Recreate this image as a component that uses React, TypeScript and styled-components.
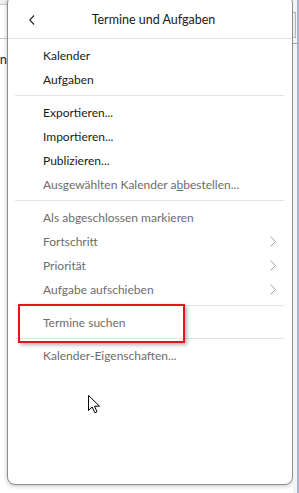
import React, { FC } from 'react';
import styled, { createGlobalStyle } from 'styled-components';

const GlobalStyle = createGlobalStyle`
    body {
        margin: 0;
        background: #ffffff;
        font-family: Lato, "Noto Sans", sans-serif;
    }
`;

const Stage = styled.div`
    position: relative;
    display: flex;
    width: 299px;
    height: 493px;
    overflow: hidden;
    background: #ffffff;
`;

const LeftEdge = styled.div`
    flex: none;
    width: 7px;
    display: flex;
    flex-direction: column;
    background: #ffffff;
    overflow: hidden;
`;

const EdgeBar = styled.div<{ $h: number; $bg: string }>`
    flex: none;
    height: ${p => p.$h}px;
    background: ${p => p.$bg};
    border-bottom: 1px solid #c8c8c8;
`;

const EdgeText = styled.div`
    flex: none;
    margin-top: 12px;
    display: flex;
    justify-content: flex-end;
    font-size: 13px;
    line-height: 16px;
    color: #2b1b4f;
    white-space: nowrap;
`;

const RightEdge = styled.div`
    flex: none;
    width: 6px;
    display: flex;
    background: #f3f3f3;
`;

const Track = styled.div`
    flex: 1;
    display: flex;
    flex-direction: column;
    padding-top: 12px;
`;

const Thumb = styled.div`
    height: 24px;
    margin-right: 1px;
    border: 1px solid #b4b4b4;
    border-left: none;
    background: #ececec;
`;

const TrackLine = styled.div`
    height: 1px;
    margin-top: 5px;
    background: #9a9a9a;
`;

const ScrollLine = styled.div`
    flex: none;
    width: 2px;
    background: #aab4cc;
`;

const Panel = styled.div`
    flex: none;
    width: 286px;
    height: 490px;
    margin-top: -5px;
    box-sizing: border-box;
    border: 1px solid #8e8e8e;
    border-radius: 8px;
    background: #ffffff;
    box-shadow: 0 1px 4px rgba(0, 0, 0, 0.25);
    display: flex;
    flex-direction: column;
`;

const Header = styled.div`
    flex: none;
    height: 43px;
    box-sizing: border-box;
    padding: 5px 26px 0 21px;
    display: flex;
    align-items: center;
    border-bottom: 1px solid #e3e3e3;
`;

const BackButton = styled.div`
    flex: none;
    width: 12px;
    display: flex;
    align-items: center;
`;

const Title = styled.div`
    flex: 1;
    text-align: center;
    font-size: 12.5px;
    color: #1a1a1a;
`;

const Menu = styled.div`
    padding-top: 4px;
    display: flex;
    flex-direction: column;
`;

const Item = styled.div<{ $disabled?: boolean }>`
    height: 24px;
    padding: 1px 16px 0 35px;
    box-sizing: border-box;
    display: flex;
    align-items: center;
    justify-content: space-between;
    font-size: 12px;
    color: ${p => (p.$disabled ? '#6d6d6d' : '#1a1a1a')};
    white-space: nowrap;
`;

const Separator = styled.div`
    height: 1px;
    margin: 4px 8px 4px 7px;
    background: #e3e3e3;
`;

const Highlight = styled.div`
    position: absolute;
    left: 18px;
    top: 304px;
    width: 167px;
    height: 39px;
    box-sizing: border-box;
    border: 2px solid #e8131b;
    box-shadow: 2px 2px 4px rgba(0, 0, 0, 0.3);
`;

const Cursor = styled.svg`
    position: absolute;
    left: 88px;
    top: 395px;
`;

const Chevron: FC = () => (
    <svg width="6" height="11" viewBox="0 0 6 11">
        <polyline points="0.5,0.5 5.5,5.5 0.5,10.5" fill="none" stroke="#a3a3a3" strokeWidth="1" />
    </svg>
);

type Entry = { label: React.ReactNode; disabled?: boolean; submenu?: boolean } | 'sep';

const entries: Entry[] = [
    { label: 'Kalender' },
    { label: 'Aufgaben' },
    'sep',
    { label: 'Exportieren...' },
    { label: 'Importieren...' },
    { label: 'Publizieren...' },
    { label: <>Ausgewählten Kalender a<u>b</u>bestellen...</>, disabled: true },
    'sep',
    { label: 'Als abgeschlossen markieren', disabled: true },
    { label: 'Fortschritt', disabled: true, submenu: true },
    { label: 'Priorität', disabled: true, submenu: true },
    { label: 'Aufgabe aufschieben', disabled: true, submenu: true },
    'sep',
    { label: 'Termine suchen', disabled: true },
    'sep',
    { label: 'Kalender-Eigenschaften...', disabled: true },
];

const App: FC = () => {
    return (
        <>
            <GlobalStyle />
            <Stage>
                <LeftEdge>
                    <EdgeBar $h={4} $bg="#f0f0f0" />
                    <EdgeBar $h={33} $bg="#ffffff" />
                    <EdgeText>n</EdgeText>
                </LeftEdge>

                <Panel>
                    <Header>
                        <BackButton>
                            <svg width="6" height="10" viewBox="0 0 6 10">
                                <polyline points="5,0.5 0.8,5 5,9.5" fill="none" stroke="#222" strokeWidth="1.1" />
                            </svg>
                        </BackButton>
                        <Title>Termine und Aufgaben</Title>
                    </Header>

                    <Menu>
                        {entries.map((entry, i) =>
                            entry === 'sep' ? (
                                <Separator key={i} />
                            ) : (
                                <Item key={i} $disabled={entry.disabled}>
                                    <span>{entry.label}</span>
                                    {entry.submenu && <Chevron />}
                                </Item>
                            )
                        )}
                    </Menu>
                </Panel>

                <RightEdge>
                    <Track>
                        <Thumb />
                        <TrackLine />
                    </Track>
                    <ScrollLine />
                </RightEdge>

                <Highlight />

                <Cursor width="13" height="20" viewBox="0 0 13 20">
                    <path
                        d="M0.5 0.5 L0.5 15.5 L4.2 12 L6.8 17.8 L9 16.8 L6.5 11.2 L11.5 11.2 Z"
                        fill="#ffffff"
                        stroke="#000000"
                        strokeWidth="1"
                        strokeLinejoin="miter"
                    />
                </Cursor>
            </Stage>
        </>
    );
};

export default App;
